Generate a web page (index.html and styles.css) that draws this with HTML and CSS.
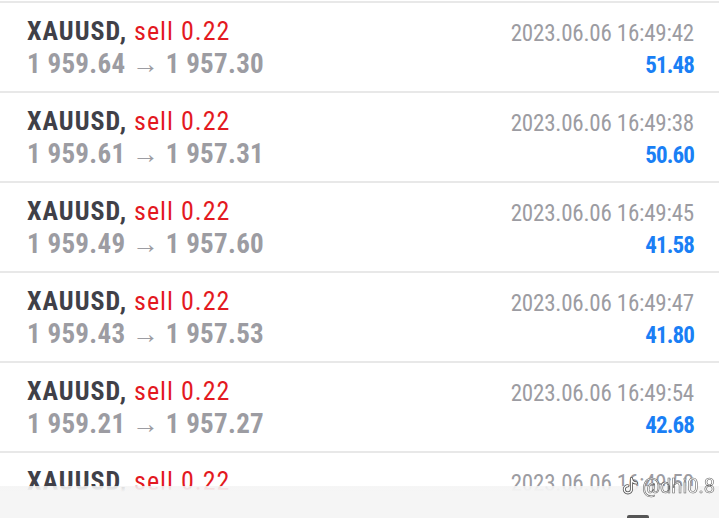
FILE: index.html
```html
<!DOCTYPE html>
<html lang="en">
<head>
  <meta charset="UTF-8">
  <meta name="viewport" content="width=device-width, initial-scale=1.0">
  <title>History</title>
  <link rel="stylesheet" href="styles.css">
</head>
<body>
  <div class="deals">
    <div class="deal">
      <div class="deal-left">
        <div class="deal-title"><b>XAUUSD,</b> <span class="sell">sell 0.22</span></div>
        <div class="deal-prices">1 959.64 → 1 957.30</div>
      </div>
      <div class="deal-right">
        <div class="deal-time">2023.06.06 16:49:42</div>
        <div class="deal-profit">51.48</div>
      </div>
    </div>
    <div class="deal">
      <div class="deal-left">
        <div class="deal-title"><b>XAUUSD,</b> <span class="sell">sell 0.22</span></div>
        <div class="deal-prices">1 959.61 → 1 957.31</div>
      </div>
      <div class="deal-right">
        <div class="deal-time">2023.06.06 16:49:38</div>
        <div class="deal-profit">50.60</div>
      </div>
    </div>
    <div class="deal">
      <div class="deal-left">
        <div class="deal-title"><b>XAUUSD,</b> <span class="sell">sell 0.22</span></div>
        <div class="deal-prices">1 959.49 → 1 957.60</div>
      </div>
      <div class="deal-right">
        <div class="deal-time">2023.06.06 16:49:45</div>
        <div class="deal-profit">41.58</div>
      </div>
    </div>
    <div class="deal">
      <div class="deal-left">
        <div class="deal-title"><b>XAUUSD,</b> <span class="sell">sell 0.22</span></div>
        <div class="deal-prices">1 959.43 → 1 957.53</div>
      </div>
      <div class="deal-right">
        <div class="deal-time">2023.06.06 16:49:47</div>
        <div class="deal-profit">41.80</div>
      </div>
    </div>
    <div class="deal">
      <div class="deal-left">
        <div class="deal-title"><b>XAUUSD,</b> <span class="sell">sell 0.22</span></div>
        <div class="deal-prices">1 959.21 → 1 957.27</div>
      </div>
      <div class="deal-right">
        <div class="deal-time">2023.06.06 16:49:54</div>
        <div class="deal-profit">42.68</div>
      </div>
    </div>
    <div class="deal">
      <div class="deal-left">
        <div class="deal-title"><b>XAUUSD,</b> <span class="sell">sell 0.22</span></div>
        <div class="deal-prices">1 959.18 → 1 957.22</div>
      </div>
      <div class="deal-right">
        <div class="deal-time">2023.06.06 16:49:50</div>
        <div class="deal-profit">42.10</div>
      </div>
    </div>
  </div>

  <div class="bottom-bar">
    <div class="watermark">
      <svg class="tt-icon" width="20" height="20" viewBox="0 0 20 20">
        <g fill="none" stroke-linecap="round">
          <path d="M10.5 2.5v10.8a3.6 3.6 0 1 1-3.6-3.6M10.5 2.5c0.3 2.6 2.2 4.4 5 4.5" stroke="#555" stroke-width="3"/>
          <path d="M10.5 2.5v10.8a3.6 3.6 0 1 1-3.6-3.6M10.5 2.5c0.3 2.6 2.2 4.4 5 4.5" stroke="#fff" stroke-width="1.4"/>
        </g>
      </svg>
      <span>@dhi0.8</span>
    </div>
    <div class="handle"></div>
  </div>
</body>
</html>
```

FILE: styles.css
```css
body {
  margin: 0;
  font-family: Roboto, "Liberation Sans", sans-serif;
  font-stretch: condensed;
  background-color: #fff;
  height: 518px;
  overflow: hidden;
}

.deals {
  padding-top: 1px;
}

.deal {
  display: flex;
  justify-content: space-between;
  height: 88px;
  border-top: 2px solid #e8e8e8;
  padding: 0 25px 0 27px;
}

.deal-left,
.deal-right {
  padding-top: 12px;
}

.deal-title {
  font-size: 26px;
  letter-spacing: 1px;
  line-height: 33px;
  color: #e3191f;
}

.deal-title b {
  color: #404048;
}

.deal-prices {
  font-size: 27px;
  letter-spacing: 0.3px;
  line-height: 33px;
  font-weight: bold;
  color: #9c9ca2;
}

.deal-right {
  text-align: right;
}

.deal-time {
  font-size: 23px;
  letter-spacing: -0.2px;
  line-height: 33px;
  color: #9c9ca2;
  padding-top: 2px;
}

.deal-profit {
  font-size: 23px;
  letter-spacing: -0.9px;
  line-height: 31px;
  font-weight: bold;
  color: #1a7ff5;
}

.bottom-bar {
  position: fixed;
  left: 0;
  right: 0;
  bottom: 0;
  height: 32px;
  background: linear-gradient(rgba(244, 244, 244, 0.85), #f5f5f5 6px);
}

.watermark {
  position: absolute;
  right: 4px;
  top: -10px;
  display: flex;
  align-items: center;
  gap: 1px;
  font-size: 20px;
  line-height: 20px;
  font-stretch: normal;
  color: #fff;
  -webkit-text-stroke: 0.6px #666;
}

.handle {
  position: absolute;
  left: 627px;
  bottom: 0;
  width: 22px;
  height: 3px;
  background: #555;
  border-radius: 2px 2px 0 0;
}
```
